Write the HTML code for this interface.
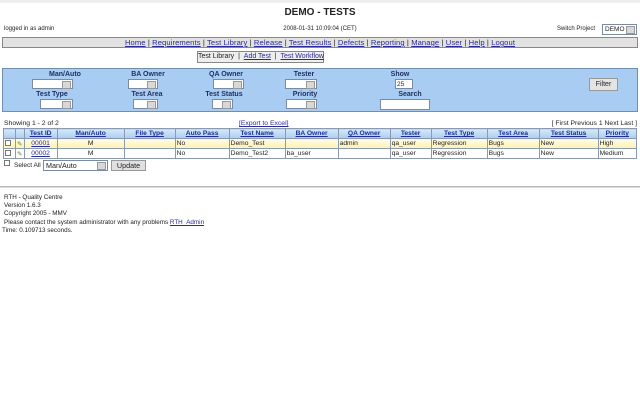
<!DOCTYPE html><html><head><style>
*{margin:0;padding:0;box-sizing:border-box}
body{width:640px;height:409px;background:#fff;font-family:"Liberation Sans",sans-serif;font-size:7px;color:#222;position:relative;overflow:hidden}
.a{position:absolute;white-space:nowrap}
a,.l{color:#2a2a9a;text-decoration:underline}
.sel{position:absolute;background:#fff;border:1px solid #7a8aa0;height:10px;line-height:9px}
.sel:after{content:"";position:absolute;right:1px;top:1px;width:7px;height:6px;background:#d8d8d8;border:1px solid #999}
.lab{position:absolute;font-weight:bold;color:#1e2e5e;transform:translateX(-50%);white-space:nowrap}
table{position:absolute;left:3px;top:128px;border-collapse:collapse;width:634px;font-size:6.7px}
td{border:1px solid #8a9ab0;height:10px;padding:0 1px;white-space:nowrap}
th{border:1px solid #8a9ab0;height:10px;background:linear-gradient(#d6e8fa,#a9cdef);color:#1c2f9a;text-decoration:underline;font-weight:bold;text-align:center}
tr.y td{background:linear-gradient(#fffbe6,#fff2b0)}
.cb{display:inline-block;width:6px;height:6px;border:1px solid #777;background:#fff}
</style></head><body>
<div class="a" style="left:0;top:0;width:640px;height:3px;background:#eee"></div>
<div class="a" style="left:0;width:640px;top:7px;text-align:center;font-weight:bold;font-size:10px">DEMO - TESTS</div>
<div class="a" style="left:4px;top:26px;font-size:6px">logged in as admin</div>
<div class="a" style="left:0;width:640px;top:26px;text-align:center;font-size:6px">2008-01-31 10:09:04 (CET)</div>
<div class="a" style="left:557px;top:26px;font-size:6px">Switch Project</div>
<div class="sel" style="left:602px;top:24px;width:35px;height:11px;font-size:6.5px;padding-left:2px">DEMO</div>
<div class="a" style="left:2px;top:37px;width:636px;height:11px;background:#e2e2e2;border:1px solid #888;text-align:center;font-size:7.6px;line-height:9px;letter-spacing:0.1px"><span class="l">Home</span> | <span class="l">Requirements</span> | <span class="l">Test Library</span> | <span class="l">Release</span> | <span class="l">Test Results</span> | <span class="l">Defects</span> | <span class="l">Reporting</span> | <span class="l">Manage</span> | <span class="l">User</span> | <span class="l">Help</span> | <span class="l">Logout</span></div>
<div class="a" style="left:197px;top:51px;width:127px;height:12px;background:#eee;border:1px solid #888;text-align:center;font-size:7px;line-height:10px">Test Library &nbsp;| &nbsp;<span class="l">Add Test</span> &nbsp;| &nbsp;<span class="l">Test Workflow</span></div>
<div class="a" style="left:2px;top:68px;width:636px;height:44px;background:#a9cdf2;border:1px solid #6f8fb0"></div>
<div class="lab" style="left:65px;top:71px">Man/Auto</div><div class="sel" style="left:32px;top:79px;width:41px"></div>
<div class="lab" style="left:148px;top:71px">BA Owner</div><div class="sel" style="left:128px;top:79px;width:30px"></div>
<div class="lab" style="left:226px;top:71px">QA Owner</div><div class="sel" style="left:213px;top:79px;width:31px"></div>
<div class="lab" style="left:304px;top:71px">Tester</div><div class="sel" style="left:285px;top:79px;width:32px"></div>
<div class="lab" style="left:400px;top:71px">Show</div><div class="a" style="left:395px;top:79px;width:18px;height:10px;background:#fff;border:1px solid #7a8aa0;font-size:6.5px;padding-left:1px;line-height:9px">25</div>
<div class="a" style="left:589px;top:78px;width:29px;height:13px;background:#e4e4e4;border:1px solid #999;font-size:7px;text-align:center;line-height:11px">Filter</div>
<div class="lab" style="left:52px;top:91px">Test Type</div><div class="sel" style="left:40px;top:99px;width:33px"></div>
<div class="lab" style="left:147px;top:91px">Test Area</div><div class="sel" style="left:133px;top:99px;width:25px"></div>
<div class="lab" style="left:224px;top:91px">Test Status</div><div class="sel" style="left:212px;top:99px;width:21px"></div>
<div class="lab" style="left:305px;top:91px">Priority</div><div class="sel" style="left:286px;top:99px;width:31px"></div>
<div class="lab" style="left:410px;top:91px">Search</div><div class="a" style="left:380px;top:99px;width:50px;height:11px;background:#fff;border:1px solid #7a8aa0"></div>
<div class="a" style="left:4px;top:120px;font-size:6.8px">Showing 1 - 2 of 2</div>
<div class="a" style="left:239px;top:120px;font-size:6.8px" ><span class="l">[Export to Excel]</span></div>
<div class="a" style="right:3px;top:120px;font-size:6.8px">[ First Previous 1 Next Last ]</div>
<table>
<tr><th style="width:12px"></th><th style="width:8px"></th><th style="width:33px">Test ID</th><th style="width:67px">Man/Auto</th><th style="width:51px">File Type</th><th style="width:54px">Auto Pass</th><th style="width:56px">Test Name</th><th style="width:53px">BA Owner</th><th style="width:52px">QA Owner</th><th style="width:41px">Tester</th><th style="width:56px">Test Type</th><th style="width:52px">Test Area</th><th style="width:59px">Test Status</th><th>Priority</th></tr>
<tr class="y"><td><span class="cb"></span></td><td style="color:#5a8a20">✎</td><td style="text-align:center"><span class="l">00001</span></td><td style="text-align:center">M</td><td></td><td>No</td><td>Demo_Test</td><td></td><td>admin</td><td>qa_user</td><td>Regression</td><td>Bugs</td><td>New</td><td>High</td></tr>
<tr><td><span class="cb"></span></td><td style="color:#5a8a20">✎</td><td style="text-align:center"><span class="l">00002</span></td><td style="text-align:center">M</td><td></td><td>No</td><td>Demo_Test2</td><td>ba_user</td><td></td><td>qa_user</td><td>Regression</td><td>Bugs</td><td>New</td><td>Medium</td></tr>
</table>
<div class="a" style="left:4px;top:160px"><span class="cb"></span></div>
<div class="a" style="left:14px;top:162px;font-size:6.5px">Select All</div>
<div class="sel" style="left:43px;top:160px;width:65px;height:11px;font-size:7.2px;padding-left:2px;line-height:10px">Man/Auto</div>
<div class="a" style="left:111px;top:160px;width:35px;height:11px;background:#e0e0e0;border:1px solid #999;font-size:7.2px;text-align:center;line-height:9px">Update</div>
<div class="a" style="left:0;top:186px;width:640px;height:2px;background:#ddd;border-top:1px solid #bbb"></div>
<div class="a" style="left:4px;top:194px;font-size:6.3px;line-height:8.2px">RTH - Quality Centre<br>Version 1.6.3<br>Copyright 2005 - MMV<br>Please contact the system administrator with any problems <span class="l">RTH_Admin</span></div>
<div class="a" style="left:2px;top:227px;font-size:6.3px">Time: 0.109713 seconds.</div>
</body></html>
